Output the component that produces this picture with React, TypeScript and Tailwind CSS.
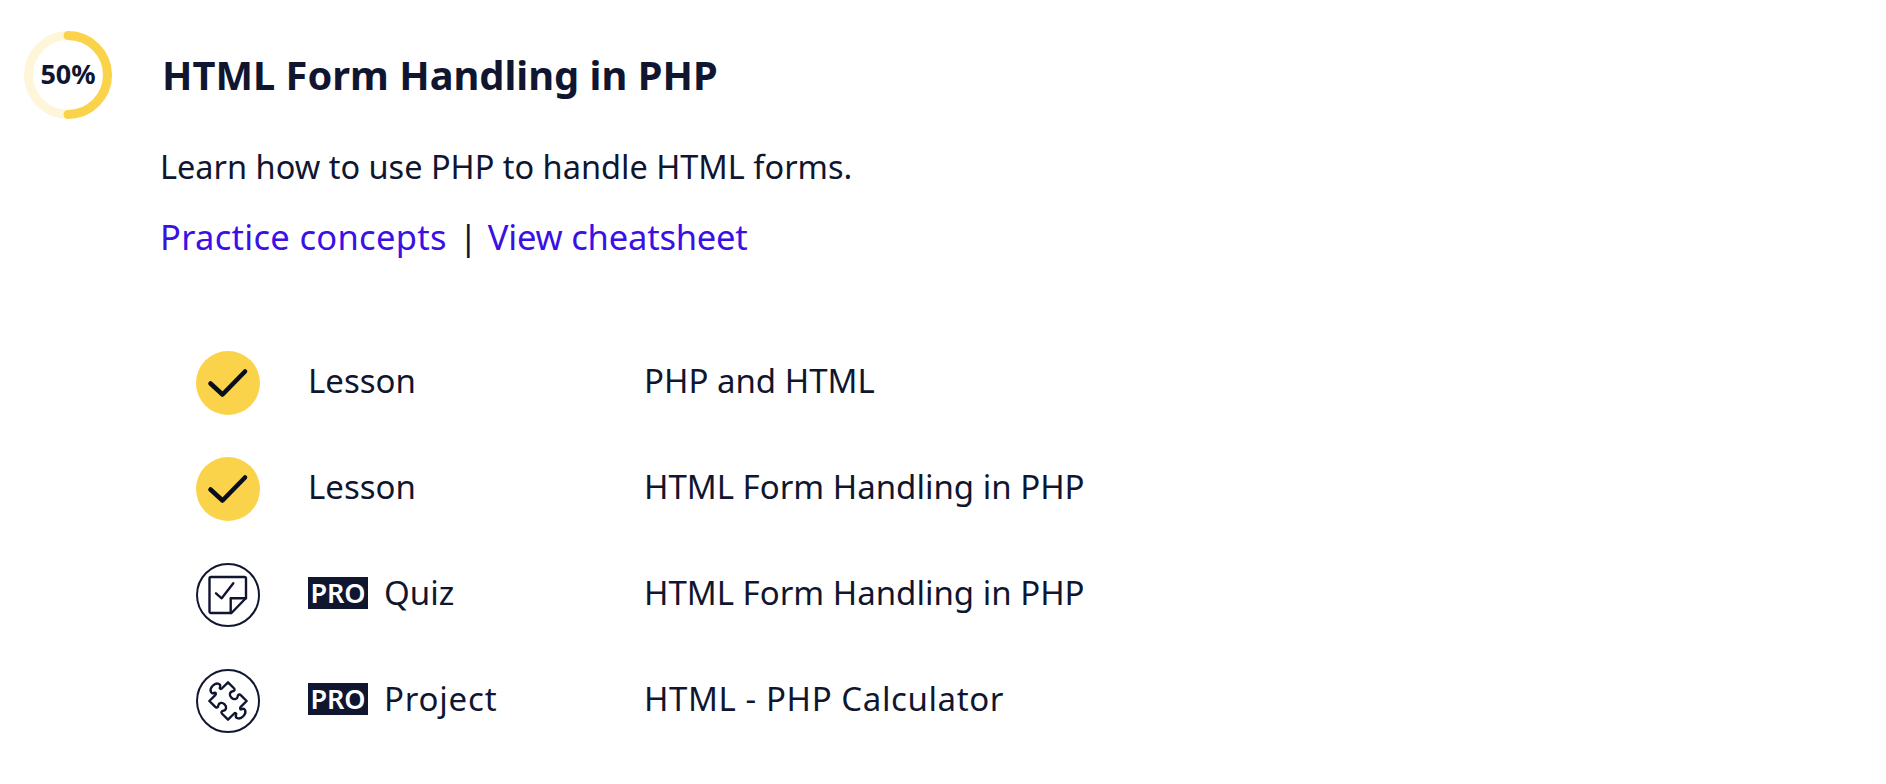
import type { ReactNode } from 'react';

const rows = [
  { kind: 'Lesson', title: 'PHP and HTML', icon: 'done', pro: false, kindClass: '', titleClass: '' },
  { kind: 'Lesson', title: 'HTML Form Handling in PHP', icon: 'done', pro: false, kindClass: '', titleClass: '' },
  { kind: 'Quiz', title: 'HTML Form Handling in PHP', icon: 'quiz', pro: true, kindClass: '', titleClass: '' },
  { kind: 'Project', title: 'HTML - PHP Calculator', icon: 'project', pro: true, kindClass: 'tracking-[0.8px]', titleClass: 'tracking-[0.6px]' },
];

function ProgressRing() {
  return (
    <svg width="88" height="88" viewBox="0 0 88 88" className="shrink-0">
      <circle cx="44" cy="44" r="39.5" fill="none" stroke="#fff5d8" strokeWidth="9" />
      <path d="M44 4.5a39.5 39.5 0 0 1 0 79" fill="none" stroke="#fbd34a" strokeWidth="9" strokeLinecap="round" />
      <text x="44" y="53" textAnchor="middle" fill="#10162f" fontSize="27" fontWeight="700" fontFamily="'Noto Sans', sans-serif">
        50%
      </text>
    </svg>
  );
}

function CircleIcon({ children }: { children: ReactNode }) {
  return (
    <svg width="64" height="64" viewBox="0 0 64 64" fill="none" stroke="#10162f" strokeLinecap="round" strokeLinejoin="round">
      <circle cx="32" cy="32" r="31" strokeWidth="2" />
      {children}
    </svg>
  );
}

function RowIcon({ icon }: { icon: string }) {
  if (icon === 'done') {
    return (
      <div className="flex h-16 w-16 items-center justify-center rounded-full bg-[#fbd34a]">
        <svg width="64" height="64" viewBox="0 0 64 64" fill="none" stroke="#0a0d1c" strokeWidth="4.600" strokeLinecap="round" strokeLinejoin="round">
          <path d="M14.500 32.500L26.500 43.500L49 20.500" />
        </svg>
      </div>
    );
  }
  if (icon === 'quiz') {
    return (
      <CircleIcon>
        <path d="M15 14h33.5a1.5 1.5 0 0 1 1.5 1.5V35L35.500 50H15a1.500 1.500 0 0 1-1.500-1.500v-33A1.500 1.500 0 0 1 15 14z" strokeWidth="2.400" />
        <path d="M50 35.300H34.700V50" strokeWidth="2.400" />
        <path d="M20 30.300l5.700 5 11.600-15" strokeWidth="2.400" />
      </CircleIcon>
    );
  }
  return (
    <CircleIcon>
      <path
        transform="translate(32 32) rotate(45) scale(1.2)"
        d="M-11-11H-4C-2.500-11-2-9.500-3-8.500C-4.500-6.500-3-4 0-4S4.500-6.500 3-8.500C2-9.500 2.500-11 4-11H11V-4C11-2.500 12.500-2 13-3.500C13.500-6 18-5 18 0S13.500 6 13 3.500C12.500 2 11 2.500 11 4V11H4C2.500 11 2 9.500 3 8.500C4.500 6.500 3 4 0 4S-4.500 6.500-3 8.500C-2 9.500-2.500 11-4 11H-11V4C-11 2.500-12.500 2-13 3.500C-13.500 6-18 5-18 0S-13.500-6-13-3.500C-12.500-2-11-2.500-11-4Z"
        strokeWidth="2"
      />
    </CircleIcon>
  );
}

export default function App() {
  return (
    <div className="h-[784px] w-[1886px] bg-white pl-6 pt-[31px] text-[#10162f] font-['Noto_Sans',sans-serif]">
      <div className="flex items-center">
        <ProgressRing />
        <h2 className="ml-[50px] text-[39.8px] leading-[64px] font-bold">HTML Form Handling in PHP</h2>
      </div>
      <div className="ml-[136px] mt-[24px]">
        <p className="text-[32.5px] leading-[48px]">Learn how to use PHP to handle HTML forms.</p>
        <p className="mt-[22px] text-[34.5px] leading-[48px]">
          <a className="tracking-[0.3px] text-[#3a10e5]">Practice concepts</a>
          <span className="ml-3 mr-[10px]">|</span>
          <a className="tracking-[-0.2px] text-[#3a10e5]">View cheatsheet</a>
        </p>
      </div>
      <ul className="ml-[172px] mt-[90px] flex flex-col gap-[42px]">
        {rows.map((row, i) => (
          <li key={i} className="flex h-16 items-center text-[33px]">
            <RowIcon icon={row.icon} />
            <div className="ml-[48px] flex w-[336px] items-center pb-1">
              {row.pro && (
                <span className="mr-4 flex h-8 w-[60px] items-center justify-center bg-[#10162f] text-[27px] font-semibold text-white">PRO</span>
              )}
              <span className={row.kindClass}>{row.kind}</span>
            </div>
            <div className={`pb-1 ${row.titleClass}`}>{row.title}</div>
          </li>
        ))}
      </ul>
    </div>
  );
}
